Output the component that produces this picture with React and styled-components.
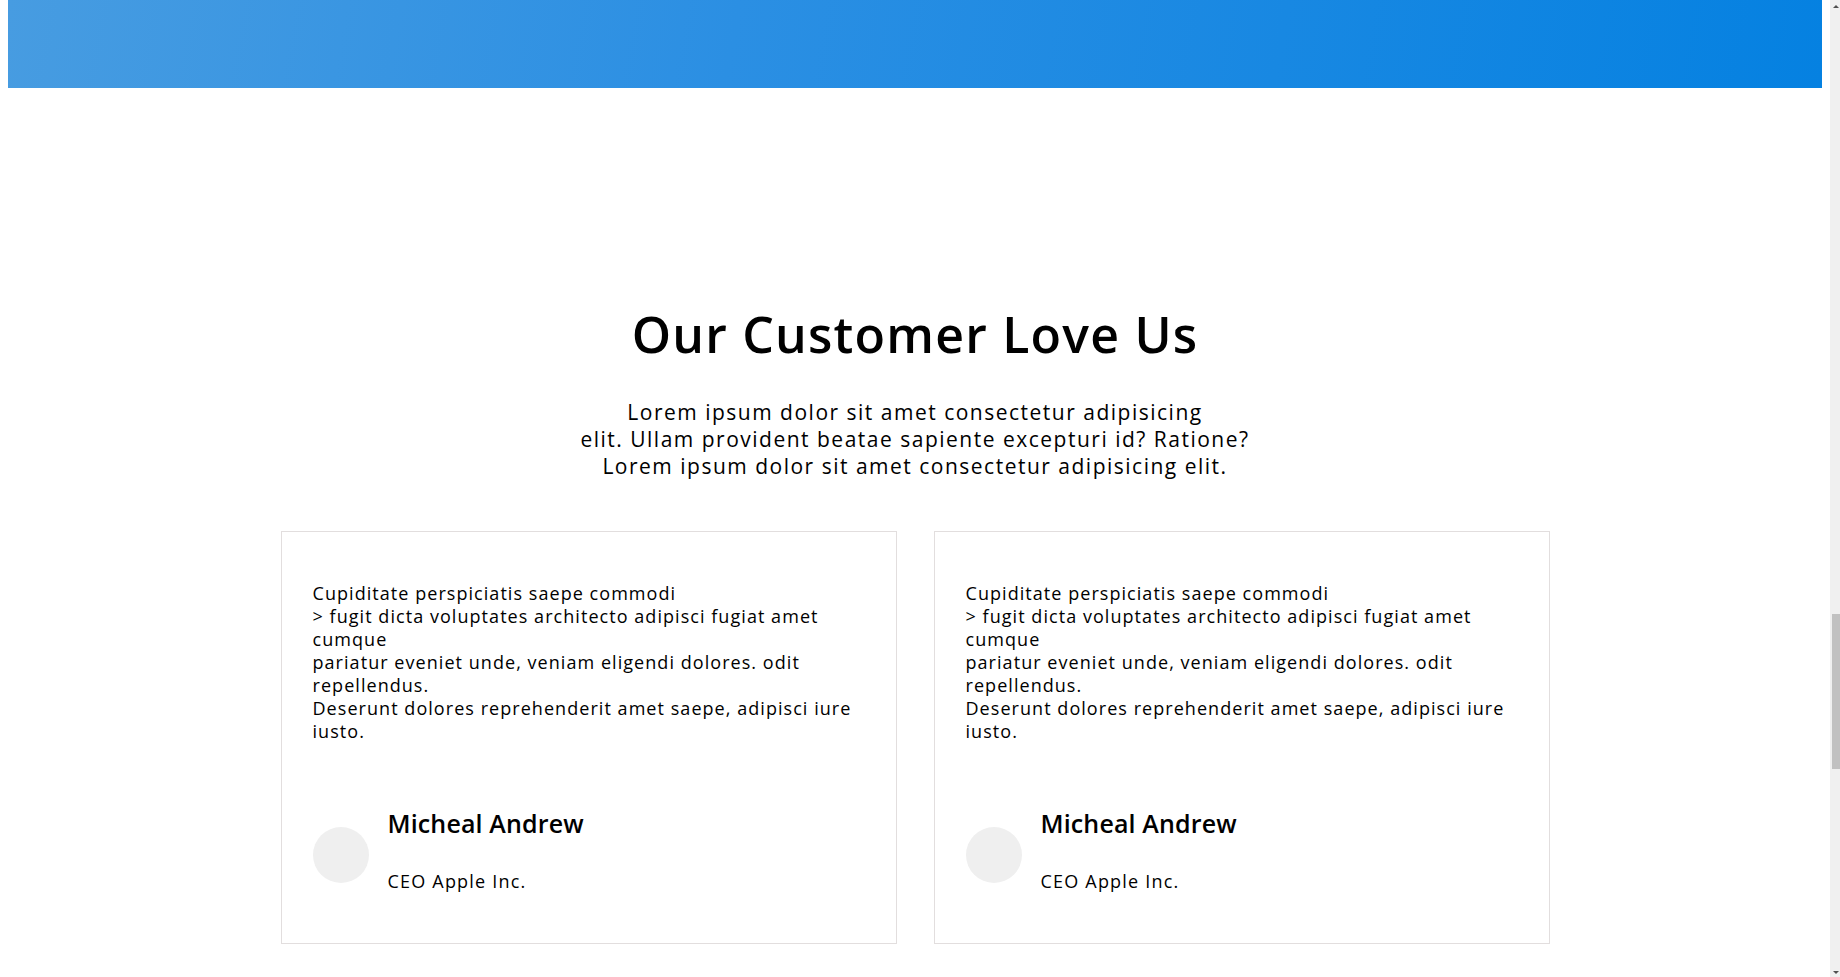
import styled, { createGlobalStyle } from "styled-components";

const GlobalStyle = createGlobalStyle`
    body {
        margin: 0 18px 0 8px;
        font-family: "Open Sans", "Liberation Sans", sans-serif;
        color: #000;
        background: #fff;
    }
`;

const Hero = styled.div`
    height: 88px;
    background: linear-gradient(100deg, #479ce1 0%, #2b8fe3 40%, #0581e1 100%);
`;

const Section = styled.section`
    padding-top: 216px;
    display: flex;
    flex-direction: column;
    align-items: center;
`;

const Title = styled.h2`
    margin: 0;
    font-size: 50px;
    line-height: 60px;
    font-weight: 600;
    letter-spacing: 1.2px;
`;

const Intro = styled.p`
    margin: 35px 0 0;
    font-size: 21px;
    line-height: 27px;
    letter-spacing: 1.5px;
    text-align: center;
`;

const Cards = styled.div`
    margin-top: 51px;
    display: grid;
    grid-template-columns: repeat(2, 616px);
    gap: 37px;
`;

const Card = styled.div`
    border: 1px solid #e2dede;
    padding: 50px 30px 41px 31px;
`;

const Quote = styled.p`
    margin: 0 0 65px;
    font-size: 18px;
    line-height: 23px;
    letter-spacing: 1.05px;
`;

const Author = styled.div`
    display: flex;
    align-items: center;
    gap: 19px;
`;

const Avatar = styled.div`
    width: 56px;
    height: 56px;
    border-radius: 50%;
    background: #efefef;
    flex-shrink: 0;
`;

const Info = styled.div`
    display: flex;
    flex-direction: column;
`;

const Name = styled.h3`
    margin: 0;
    font-size: 25px;
    line-height: 30px;
    font-weight: 600;
    letter-spacing: 0.15px;
`;

const Role = styled.p`
    margin: 32px 0 9px;
    font-size: 18px;
    line-height: 23px;
    letter-spacing: 1.2px;
`;

/* the browser's scrollbar, as it shows in the screenshot */
const ScrollTrack = styled.div`
    position: fixed;
    top: 0;
    right: 0;
    bottom: 0;
    width: 10px;
    background: #f0f0f0;
`;

const ScrollThumb = styled.div`
    position: absolute;
    top: 614px;
    right: 0;
    width: 8px;
    height: 155px;
    background: #c1c1c1;
`;

const ScrollArrow = styled.div`
    position: absolute;
    right: 1px;
    width: 0;
    height: 0;
    border-left: 3px solid transparent;
    border-right: 3px solid transparent;
    ${({ $down }) =>
        $down
            ? "bottom: 3px; border-top: 3px solid #505050;"
            : "top: 5px; border-bottom: 3px solid #505050;"}
`;

const quoteLines = [
    "Cupiditate perspiciatis saepe commodi",
    "> fugit dicta voluptates architecto adipisci fugiat amet",
    "cumque",
    "pariatur eveniet unde, veniam eligendi dolores. odit",
    "repellendus.",
    "Deserunt dolores reprehenderit amet saepe, adipisci iure",
    "iusto.",
];

const testimonials = [
    { name: "Micheal Andrew", role: "CEO Apple Inc." },
    { name: "Micheal Andrew", role: "CEO Apple Inc." },
];

const Testimonial = ({ name, role }) => (
    <Card>
        <Quote>
            {quoteLines.map((line, i) => (
                <span key={i}>
                    {line}
                    {i < quoteLines.length - 1 && <br />}
                </span>
            ))}
        </Quote>
        <Author>
            <Avatar />
            <Info>
                <Name>{name}</Name>
                <Role>{role}</Role>
            </Info>
        </Author>
    </Card>
);

const App = () => {
    return (
        <>
            <GlobalStyle />
            <Hero />
            <Section>
                <Title>Our Customer Love Us</Title>
                <Intro>
                    Lorem ipsum dolor sit amet consectetur adipisicing
                    <br />
                    elit. Ullam provident beatae sapiente excepturi id? Ratione?
                    <br />
                    Lorem ipsum dolor sit amet consectetur adipisicing elit.
                </Intro>
                <Cards>
                    {testimonials.map((t, i) => (
                        <Testimonial key={i} {...t} />
                    ))}
                </Cards>
            </Section>
            <ScrollTrack>
                <ScrollArrow />
                <ScrollThumb />
                <ScrollArrow $down />
            </ScrollTrack>
        </>
    );
};

export default App;
